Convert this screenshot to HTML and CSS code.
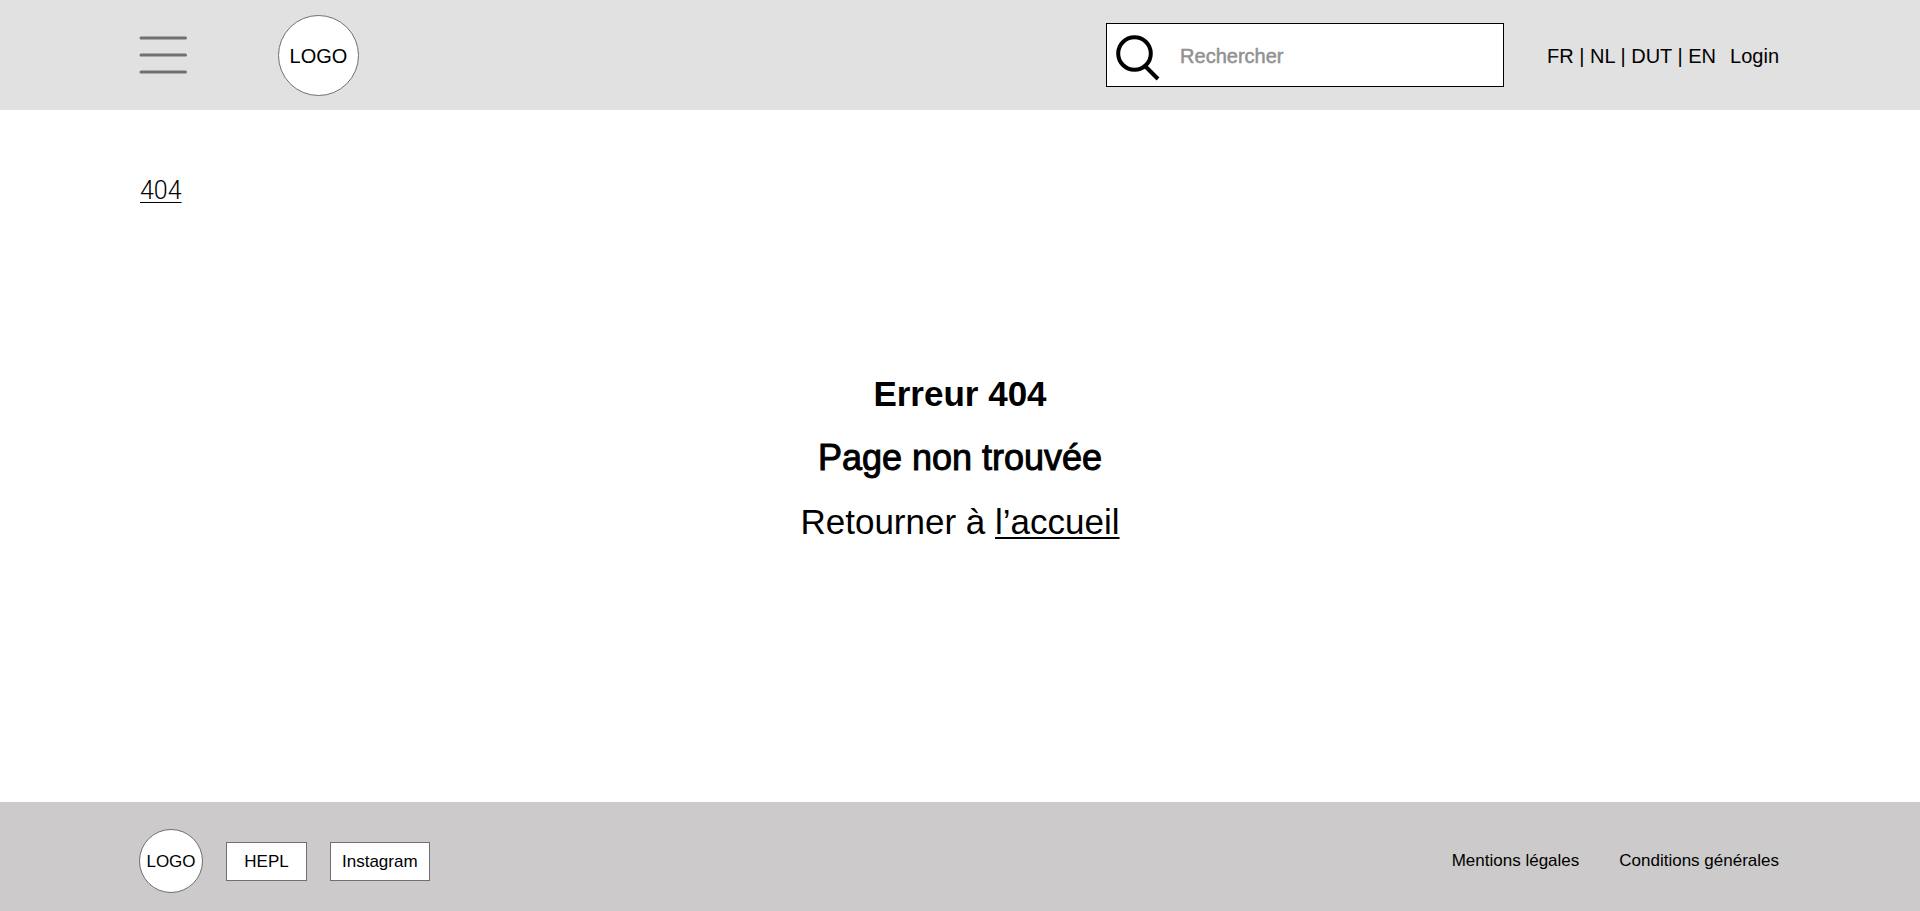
FILE: index.html
```html
<!DOCTYPE html>
<html lang="fr">
<head>
  <meta charset="utf-8">
  <meta name="viewport" content="width=device-width, initial-scale=1">
  <title>Erreur 404</title>
  <link rel="stylesheet" href="styles.css">
</head>
<body class="page">
  <header class="header">
    <button class="menu" type="button" aria-label="Menu">
      <svg class="menu-icon" viewBox="0 0 48 38" aria-hidden="true">
        <path d="M2 2H46.500M2 19H46.500M2 36H46.500" fill="none" stroke="#707070" stroke-width="3" stroke-linecap="round"/>
      </svg>
    </button>
    <a class="logo" href="#">LOGO</a>
    <form class="search" role="search">
      <label class="search-label" for="search" aria-label="Rechercher">
        <svg class="search-icon" viewBox="0 0 44 46" aria-hidden="true">
          <g fill="none" stroke="#000" stroke-width="4">
            <circle cx="18.500" cy="18.500" r="16.300"/>
            <path d="M29 31L42 44"/>
          </g>
        </svg>
      </label>
      <input class="search-input" id="search" type="search" placeholder="Rechercher">
    </form>
    <nav class="nav">
      <span><a href="#">FR</a> | <a href="#">NL</a> | <a href="#">DUT</a> | <a href="#">EN</a></span>
      <a href="#">Login</a>
    </nav>
  </header>

  <main class="main">
    <nav class="breadcrumb"><a class="breadcrumb-link" href="#">404</a></nav>
    <section class="message">
      <h1 class="message-title">Erreur 404</h1>
      <p class="message-subtitle">Page non trouvée</p>
      <p class="message-text">Retourner à <a class="message-link" href="#">l’accueil</a></p>
    </section>
  </main>

  <footer class="footer">
    <a class="logo logo-small" href="#">LOGO</a>
    <a class="partner" href="#">HEPL</a>
    <a class="partner" href="#">Instagram</a>
    <nav class="legal">
      <a href="#">Mentions légales</a>
      <a href="#">Conditions générales</a>
    </nav>
  </footer>
</body>
</html>
```

FILE: styles.css
```css
* {
  box-sizing: border-box;
}

.page {
  display: flex;
  flex-direction: column;
  min-height: 100vh;
  margin: 0;
  background: #fff;
  color: #000;
  font-family: "Liberation Sans", Arial, sans-serif;
  font-size: 20px;
}

a {
  color: inherit;
  text-decoration: none;
}

.header {
  display: flex;
  align-items: center;
  min-height: 110px;
  padding: 14px 141px 14px 139px;
  background: #e1e1e1;
}

.menu {
  display: flex;
  margin-right: 91px;
  padding: 0;
  border: 0;
  background: none;
  cursor: pointer;
}

.menu-icon {
  width: 48px;
  height: 38px;
}

.logo {
  display: flex;
  align-items: center;
  justify-content: center;
  width: 81px;
  height: 81px;
  padding-top: 2px;
  border: 1px solid #707070;
  border-radius: 50%;
  background: #fff;
}

.search {
  display: flex;
  align-items: center;
  width: 398px;
  height: 64px;
  margin-left: auto;
  padding: 0 9px;
  border: 1px solid #000;
  background: #fff;
}

.search-label {
  display: flex;
  padding-top: 5px;
}

.search-icon {
  width: 44px;
  height: 46px;
}

.search-input {
  flex: 1;
  min-width: 0;
  height: 100%;
  margin-left: 20px;
  padding: 2px 0 0;
  border: 0;
  outline: 0;
  background: none;
  font: inherit;
}

.search-input::placeholder {
  color: #919191;
  opacity: 1;
  -webkit-text-stroke: 0.5px #919191;
}

.nav {
  display: flex;
  gap: 14px;
  margin-left: 43px;
  padding-top: 2px;
}

.main {
  display: grid;
  flex: 1;
  grid-template-rows: 1fr auto 1fr;
  padding: 4px 140px 0;
}

.breadcrumb {
  padding-top: 62px;
  font-family: Roboto, "Liberation Sans", sans-serif;
  font-size: 25px;
  font-weight: 300;
  line-height: 30px;
}

.breadcrumb-link,
.message-link {
  text-decoration: underline;
  text-underline-offset: 3px;
}

.breadcrumb-link {
  text-decoration-thickness: 1px;
}

.message {
  font-size: 35px;
  line-height: 64px;
  text-align: center;
}

.message-title,
.message-subtitle,
.message-text {
  margin: 0;
}

.message-title {
  font-size: 35px;
}

.message-subtitle {
  font-size: 36px;
  -webkit-text-stroke: 1px #000;
}

.message-link {
  text-decoration-thickness: 2px;
}

.footer {
  display: flex;
  align-items: center;
  gap: 23px;
  padding: 27px 141px 18px 139px;
  background: #cccaca;
  font-size: 17px;
}

.logo-small {
  width: 64px;
  height: 64px;
}

.partner {
  min-width: 81px;
  padding: 0 11px;
  border: 1px solid #707070;
  background: #fff;
  line-height: 37px;
  text-align: center;
}

.legal {
  display: flex;
  gap: 40px;
  margin-left: auto;
}
```
